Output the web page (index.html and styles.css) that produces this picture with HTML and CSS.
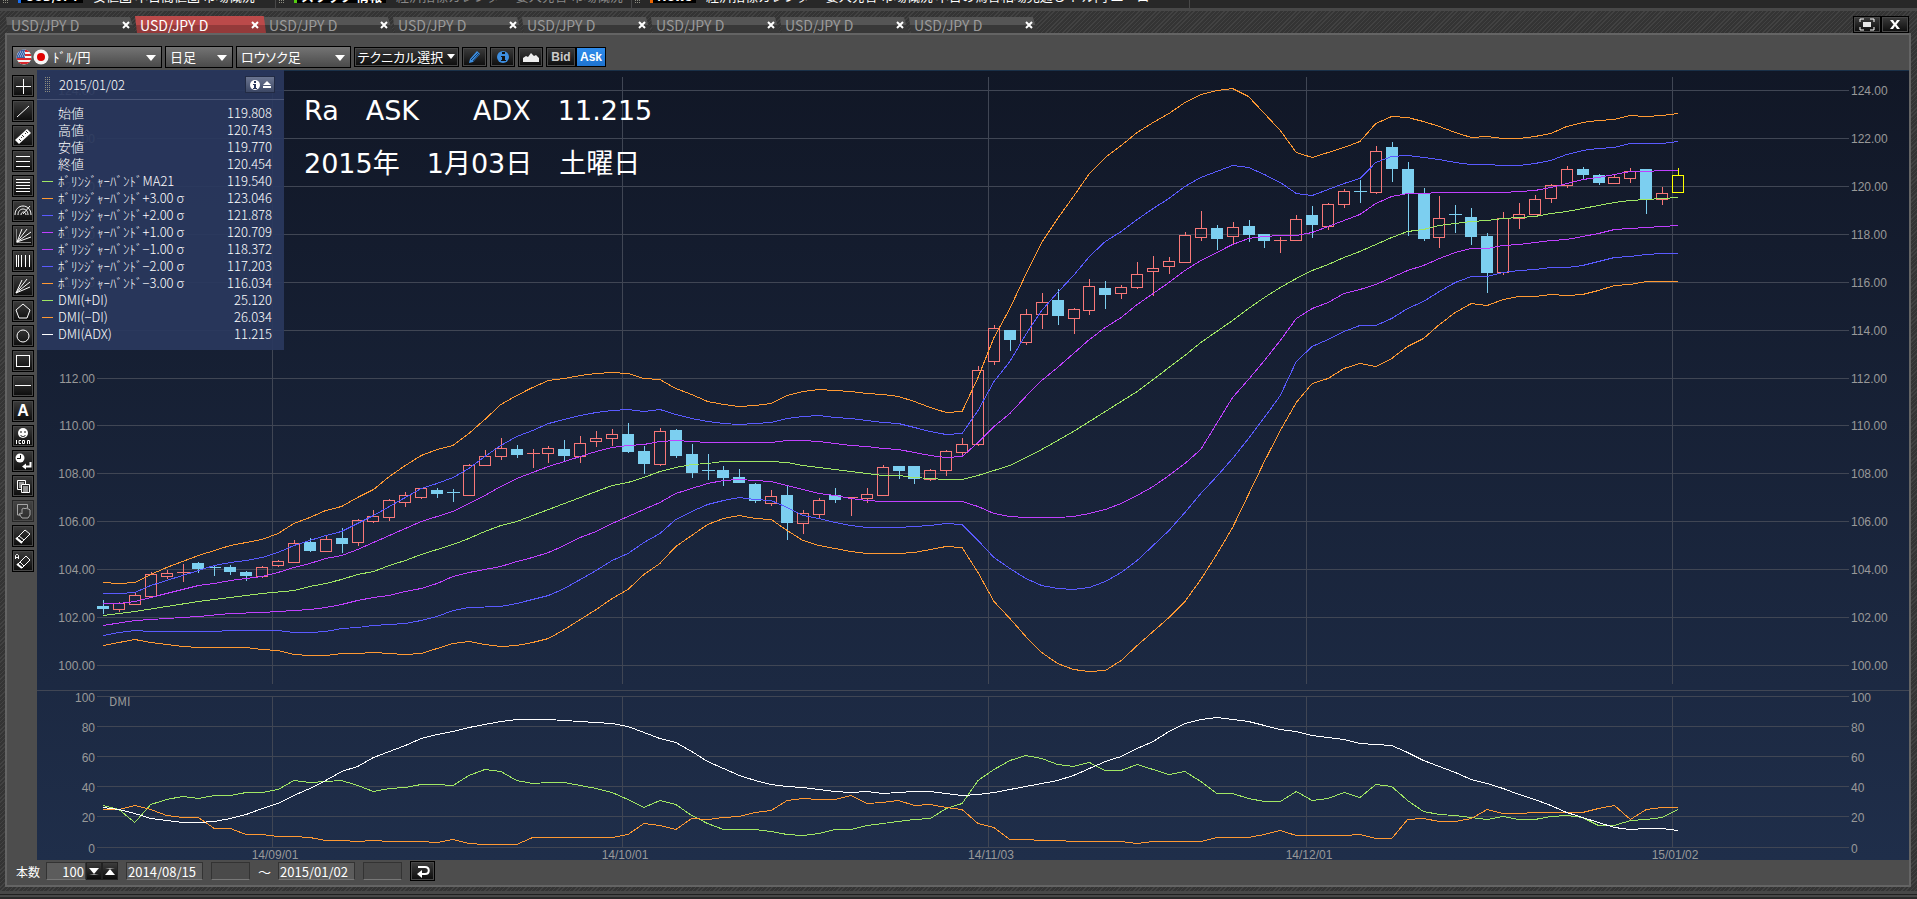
FILE: index.html
```html
<!DOCTYPE html>
<html lang="ja">
<head>
  <meta charset="UTF-8">
  <meta name="viewport" content="width=device-width, initial-scale=1.0">
  <title>USD/JPY D</title>
  <link rel="stylesheet" href="styles.css">
</head>
<body>
  <div class="ticker">
    <div class="ticker-group group-a">
      <span class="grip"></span><b class="pair blue">USD/JPY</b><span class="news">安値圏 本日高値圏 市場概況</span>
    </div>
    <div class="ticker-group group-b">
      <span class="grip"></span><b class="pair green">スワップ 情報</b><span class="news dim">経済指標カレンダー 要人発言 市場概況</span>
    </div>
    <div class="ticker-group group-c">
      <span class="grip"></span><b class="pair orange">News</b><span class="news">経済指標カレンダー 要人発言 市場概況 本日の為替相場見通し ドル円 ユーロ</span>
    </div>
  </div>

  <div class="tab-bar">
    <div class="tabs" id="tabs"></div>
    <div class="window-buttons">
      <button aria-label="最大化"><svg width="16" height="13" viewBox="0 0 16 13"><path d="M1 4V1h4M11 1h4v3M15 9v3h-4M5 12H1V9" fill="none" stroke="#fff"/><rect x="4" y="4" width="8" height="5" fill="#e8e8e8"/></svg></button>
      <button aria-label="閉じる"><svg width="12" height="11" viewBox="0 0 12 11"><path d="M1 1h3l2 3 2-3h3L7.5 5.500 11 10H8L6 7l-2 3H1l3.500-4.500z" fill="#fff"/></svg></button>
    </div>
  </div>

  <div class="window">
    <div class="toolbar">
      <div class="select-box pair-select">
        <svg class="flags" width="34" height="16" viewBox="0 0 34 16">
          <clipPath id="us"><circle cx="8" cy="8" r="7.500"/></clipPath>
          <g clip-path="url(#us)">
            <rect width="16" height="16" fill="#f4f4f4"/>
            <path d="M0 2h16M0 6h16M0 10h16M0 14h16" stroke="#d8262c" stroke-width="2"/>
            <rect width="9" height="9" fill="#3a62a8"/>
            <path d="M2 3h7M1 5h7M2 7h7" stroke="#cfdcf2" stroke-dasharray="1 1"/>
          </g>
          <circle cx="25" cy="8" r="7.500" fill="#f6f6f6"/>
          <circle cx="25" cy="8" r="4" fill="#e00000"/>
        </svg>
        <select aria-label="通貨ペア"><option>ﾄﾞﾙ/円</option></select>
      </div>
      <div class="select-box span-select"><select aria-label="足種"><option>日足</option></select></div>
      <div class="select-box type-select"><select aria-label="チャート種類"><option>ロウソク足</option></select></div>
      <button class="technical">テクニカル選択<i class="caret"></i></button>
      <button class="tool" aria-label="描画"><svg width="16" height="16" viewBox="0 0 16 16"><path d="M2 14l1-4 7-8 3 3-7 8z" fill="#3d8ee0"/><path d="M4 11l7-7M6 12l6-7" stroke="#123a66"/></svg></button>
      <button class="tool" aria-label="情報"><svg width="14" height="14" viewBox="0 0 14 14"><circle cx="7" cy="7" r="6" fill="#3d8ee0"/><path d="M6 2h3v2H6zM5 6h4v4h1v1H5v-1h1V7H5z" fill="#111"/></svg></button>
      <button class="tool" aria-label="エリア"><svg width="18" height="12" viewBox="0 0 18 12"><path d="M1 11V7l3-2 2 1 3-4 3 3 2-1 3 3v4z" fill="#eee"/></svg></button>
      <div class="rate-switch"><button>Bid</button><button class="on">Ask</button></div>
    </div>

    <div class="workspace">
      <div class="draw-tools">
        <button aria-label="十字線"><svg viewBox="0 0 20 20"><path d="M10.500 3v15M3 10.500h15"/></svg></button>
        <button aria-label="直線"><svg viewBox="0 0 20 20"><path d="M4 16L16 5"/></svg></button>
        <button aria-label="チャネル"><svg viewBox="0 0 20 20"><path d="M2 14L14 3l4 4L6 18z" fill="#fff" stroke="none"/><path d="M6 13l2 2M8 11l1 1M9 9l2 2M12 7l1 1M13 5l2 2" stroke="#333"/></svg></button>
        <button aria-label="三本線"><svg viewBox="0 0 20 20"><path d="M3 5.500h14M3 10.500h14M3 15.500h14"/></svg></button>
        <button aria-label="五本線"><svg viewBox="0 0 20 20"><path d="M3 3.500h14M3 6.500h14M3 9.500h14M3 12.500h14M3 15.500h14"/></svg></button>
        <button aria-label="アーク"><svg viewBox="0 0 20 20"><path d="M2 14c0-12 16-12 16 0M5 14c0-8 10-8 10 0M8 14c0-4 5-4 5 0M10 13l7-8"/></svg></button>
        <button aria-label="ファン"><svg viewBox="0 0 20 20"><path d="M3.500 3v13.500H18" stroke="#888"/><path d="M4 16L9 3M4 16L14 3M4 16L18 6M4 16l14-5"/></svg></button>
        <button aria-label="タイムゾーン"><svg viewBox="0 0 20 20"><path d="M3.500 4v12M5.500 4v12M8.500 4v12M12.500 4v12M16.500 4v12"/></svg></button>
        <button aria-label="角度線"><svg viewBox="0 0 20 20"><path d="M3 17L9 4M3 17L14 3M3 17L17 6M3 17l14-6"/></svg></button>
        <button aria-label="五角形"><svg viewBox="0 0 20 20"><path d="M10 3l7 6-3 8H6L3 9z"/></svg></button>
        <button aria-label="円"><svg viewBox="0 0 20 20"><circle cx="10" cy="10" r="6"/></svg></button>
        <button aria-label="四角"><svg viewBox="0 0 20 20"><rect x="3.500" y="4.500" width="13" height="11"/></svg></button>
        <button aria-label="水平線"><svg viewBox="0 0 20 20"><path d="M2 9.500h16"/></svg></button>
        <button class="letter">A</button>
        <button aria-label="アイコン"><svg viewBox="0 0 20 20"><circle cx="10" cy="7" r="5" fill="#fff" stroke="none"/><path d="M8 5v2M12 5v2M7.500 9c1 2 4 2 5 0" stroke="#111"/><path d="M3.500 14v4M8 14.500H6v3h2M9.500 14.500h2v3h-2zM14.500 18v-3.500h2V18"/></svg></button>
        <button aria-label="履歴"><svg viewBox="0 0 20 20"><circle cx="7" cy="7" r="4.500" fill="#fff" stroke="none"/><path d="M7.500 4v3.500H4" stroke="#111"/><path d="M17.500 11v4.500H12" stroke-width="2"/><path d="M9 15.500l4-3v6z" fill="#fff" stroke="none"/></svg></button>
        <button aria-label="コピー"><svg viewBox="0 0 20 20"><path d="M4.500 4.500h8v9h-8z"/><path d="M8.500 8.500h8v8h-8z" fill="#222"/><path d="M6 7h5M6 9h2M6 11h2M10 11h5M10 13h5M10 15h5"/></svg></button>
        <button class="off" aria-label="移動"><svg viewBox="0 0 20 20"><path d="M8 14H4.500V3.500h10V7"/><path d="M9 17l-3-4 2-1 1 1V8l2-1 1 1 1-1 2 1 1 0 1 1v5l-2 3z"/></svg></button>
        <button aria-label="消去"><svg viewBox="0 0 20 20"><path d="M4 12l8-8 5 4-8 8zM6 10l5 4"/><path d="M3 12l6 5" stroke-width="2"/></svg></button>
        <button aria-label="全消去"><svg viewBox="0 0 20 20"><path d="M5 13l8-8 4 4-8 8zM7 11l4 4"/><path d="M4 13l5 4" stroke-width="2"/><path d="M2.500 8V4.500l1-1h1l1 1V8M3 6.500h2"/></svg></button>
      </div>

      <div class="chart-area">
        <svg class="chart" id="chart" viewBox="37 70 1872 790" role="img" aria-label="USD/JPY 日足チャート">
          <defs>
            <linearGradient id="night" x1="0" y1="0" x2="0" y2="1">
              <stop offset="0" stop-color="#111726"/>
              <stop offset="1" stop-color="#1f2e4a"/>
            </linearGradient>
          </defs>
          <rect x="37" y="70" width="1872" height="790" fill="url(#night)"/>
          <path d="M37 70.500h1872" stroke="#1a3048"/>
        </svg>
        <section class="info-panel">
          <header>
            <span class="grip"></span>
            <time>2015/01/02</time>
            <button aria-label="たたむ"><svg width="22" height="12" viewBox="0 0 22 12"><circle cx="6" cy="6" r="5" fill="#fff"/><path d="M5 2h2v2H5zM4 5h3v4h1v1H4V9h1V6H4z" fill="#29375c"/><path d="M14 6l4-4 4 4zM14 7h8v2h-8z" fill="#fff"/></svg></button>
          </header>
          <table>
            <tbody id="infoRows"></tbody>
          </table>
        </section>
      </div>
    </div>

    <form class="period-bar">
      <label for="bars">本数</label>
      <div class="spinner">
        <input type="text" id="bars" value="100">
        <button type="button" class="down" aria-label="減らす"></button>
        <button type="button" class="up" aria-label="増やす"></button>
      </div>
      <input type="text" class="date" aria-label="開始日" value="2014/08/15">
      <input type="text" class="time" aria-label="開始時刻" disabled>
      <span class="tilde">～</span>
      <input type="text" class="date" aria-label="終了日" value="2015/01/02">
      <input type="text" class="time" aria-label="終了時刻" disabled>
      <button type="button" class="apply" aria-label="適用"><svg width="16" height="14" viewBox="0 0 16 14"><path d="M3 3h7c5 0 5 7 0 7H6" fill="none" stroke="#fff" stroke-width="2"/><path d="M2 10l5-4v8z" fill="#fff"/></svg></button>
    </form>
  </div>
  <div class="bottom-edge"></div>
  <script src="script.js"></script>
</body>
</html>
```
FILE: styles.css
```css
* {
  box-sizing: border-box;
}

body {
  margin: 0;
  min-height: 100vh;
  display: flex;
  flex-direction: column;
  color: #fff;
  font-family: "Noto Sans CJK JP", sans-serif;
  font-size: 13px;
  background: repeating-linear-gradient(135deg, #424242 0 1px, #343434 1px 3px);
  overflow-x: hidden;
}

button, input, select {
  font: inherit;
  color: inherit;
  margin: 0;
  padding: 0;
  border: 0;
  border-radius: 0;
}

/* 上部のニュース帯 */
.ticker {
  display: flex;
  height: 11px;
  overflow: hidden;
  background: #282828;
  border-bottom: 3px solid #484848;
  flex: none;
}

.ticker-group {
  display: flex;
  gap: 10px;
  height: 8px;
  overflow: hidden;
  white-space: nowrap;
  padding-left: 2px;
  border-right: 1px solid #484848;
}

.group-a {
  width: 276px;
}

.group-b {
  width: 356px;
}

.group-c {
  width: 558px;
}

.pair {
  padding: 0 4px;
  background: #000;
  border-left: 3px solid #1a6ff0;
}

.pair.green {
  border-color: #5c1;
}

.pair.orange {
  border-color: #e60;
}

.pair, .news {
  display: flex;
  align-items: flex-end;
  overflow: hidden;
  height: 3px;
  line-height: 14px;
}

.news.dim {
  color: #888;
}

.grip {
  width: 6px;
  height: 16px;
  background: conic-gradient(#8c8c80 25%, transparent 0) 0 0 / 2px 2px;
}

.ticker .grip {
  height: 4px;
}

/* タブ */
.tab-bar {
  display: flex;
  justify-content: space-between;
  align-items: flex-end;
  height: 22px;
  padding: 0 8px 0 6px;
  flex: none;
}

.tabs {
  display: flex;
  align-items: flex-end;
}

.tab {
  display: flex;
  align-items: center;
  width: 129px;
  height: 16px;
  padding: 0 2px 0 5px;
  color: #9a9a9a;
  font-size: 14px;
  line-height: 18px;
  background: linear-gradient(#555 0 50%, #383838 50%);
  clip-path: polygon(0 0, 96% 0, 100% 100%, 2px 100%);
}

.tab span {
  flex: 1;
}

.tab button {
  width: 14px;
  height: 14px;
  background: none;
  line-height: 0;
}

.tab.active {
  width: 134px;
  height: 17px;
  margin-right: -5px;
  padding-right: 7px;
  color: #fff;
  background: linear-gradient(#bb4a4a 0 55%, #943a3a 55%);
}

.window-buttons {
  display: flex;
}

.window-buttons button, .technical, .tool, .rate-switch button, .draw-tools button, .apply {
  display: flex;
  align-items: center;
  justify-content: center;
  background: linear-gradient(#3c3c3c, #0c0c0c);
  border: 1px solid #000;
  box-shadow: inset 0 0 0 1px #484848;
}

.window-buttons button {
  width: 28px;
  height: 17px;
}

/* チャート画面 */
.window {
  margin: 0 6px 0 5px;
  background: #4d4d4d;
  border: 2px solid #646464;
  flex: none;
}

.toolbar {
  display: flex;
  align-items: center;
  gap: 3px;
  height: 35px;
  padding: 8px 0 0 5px;
}

.select-box {
  position: relative;
  height: 22px;
  border: 1px solid #000;
  background: linear-gradient(#747474, #4a4a4a);
}

.select-box::after {
  content: "";
  position: absolute;
  right: 5px;
  top: 8px;
  border: 5px solid transparent;
  border-top: 6px solid #fff;
  border-bottom: 0;
  pointer-events: none;
}

.select-box select {
  width: 100%;
  height: 20px;
  padding-left: 4px;
  appearance: none;
  background: none;
  font-feature-settings: "palt";
}

.pair-select {
  width: 150px;
}

.pair-select select {
  padding-left: 40px;
}

.flags {
  position: absolute;
  left: 3px;
  top: 2px;
}

.span-select {
  width: 68px;
}

.type-select {
  width: 115px;
}

.technical {
  width: 105px;
  height: 20px;
  gap: 4px;
  font-feature-settings: "palt";
}

.caret {
  border: 4px solid transparent;
  border-top: 5px solid #fff;
  border-bottom: 0;
}

.tool {
  width: 25px;
  height: 20px;
}

.rate-switch {
  display: flex;
}

.rate-switch button {
  width: 30px;
  height: 20px;
  color: #ccc;
  font: bold 12px "Liberation Sans", sans-serif;
}

.rate-switch .on {
  color: #fff;
  background: linear-gradient(#2e8cec, #1f74d0);
  box-shadow: none;
}

.workspace {
  display: flex;
}

.draw-tools {
  width: 30px;
  padding: 5px 0 0 5px;
  display: flex;
  flex-direction: column;
  gap: 3px;
  flex: none;
}

.draw-tools button {
  width: 22px;
  height: 22px;
}

.draw-tools svg {
  width: 20px;
  height: 20px;
  fill: none;
  stroke: #fff;
}

.draw-tools .letter {
  font: bold 16px "Liberation Sans", sans-serif;
}

.draw-tools .off {
  opacity: 0.5;
}

.chart-area {
  position: relative;
  flex: 1;
  min-width: 0;
}

.chart {
  display: block;
  width: 100%;
}

.chart .grid {
  stroke: #404654;
}

.chart .line {
  fill: none;
  shape-rendering: crispEdges;
}

.chart .candle {
  shape-rendering: crispEdges;
}

.chart .axis {
  fill: #999;
  font: 12px "Liberation Sans", sans-serif;
}

.chart .pane-name {
  fill: #999;
  font-size: 12px;
}

.chart .memo {
  fill: #fff;
  font: 27px "DejaVu Sans", "Noto Sans CJK JP", sans-serif;
}

/* 四本値パネル */
.info-panel {
  position: absolute;
  left: 0;
  top: 0;
  width: 247px;
  height: 280px;
  font-weight: 300;
  background: rgba(42, 56, 94, 0.93);
}

.info-panel header {
  display: flex;
  align-items: center;
  height: 30px;
  padding: 0 9px 0 7px;
  border-bottom: 1px solid #4a5576;
}

.info-panel time {
  flex: 1;
  padding-left: 9px;
}

.info-panel header button {
  display: flex;
  align-items: center;
  justify-content: center;
  width: 30px;
  height: 17px;
  border: 1px solid #222b44;
  background: linear-gradient(#6b7590, #3d4865);
}

.info-panel table {
  width: 100%;
  margin-top: 4px;
  border-collapse: collapse;
}

.info-panel td, .info-panel th {
  height: 17px;
  padding: 0;
  line-height: 17px;
  font-weight: 300;
  text-align: left;
  white-space: nowrap;
}

.info-panel .key {
  width: 21px;
  padding: 2px 0 0 5px;
}

.key i {
  display: block;
  width: 11px;
  height: 1px;
  background: currentColor;
}

.info-panel .value {
  padding-right: 12px;
  text-align: right;
}

/* 期間指定 */
.period-bar {
  display: flex;
  align-items: center;
  gap: 8px;
  height: 25px;
  padding: 0 0 3px 9px;
}

.period-bar label {
  font-size: 12px;
  margin-right: -2px;
}

.period-bar input {
  height: 18px;
  padding: 0 1px;
  background: #5c5c5c;
  border: 1px solid #333;
  border-bottom-color: #777;
}

.spinner {
  display: flex;
  width: 72px;
}

.spinner input {
  width: 40px;
  text-align: right;
}

.spinner button {
  width: 16px;
  height: 18px;
  display: flex;
  align-items: center;
  justify-content: center;
  background: linear-gradient(#3c3c3c, #0c0c0c);
  border: 1px solid #222;
}

.spinner button::after {
  content: "";
  border: 5px solid transparent;
}

.spinner .down::after {
  border-top: 6px solid #fff;
  border-bottom: 1px solid #aaa;
}

.spinner .up::after {
  border-bottom: 6px solid #fff;
  border-top: 1px solid #aaa;
}

.period-bar .date {
  width: 77px;
}

.period-bar .time {
  width: 39px;
  background: #4a4a4a;
}

.tilde {
  width: 12px;
  text-align: center;
}

.apply {
  width: 25px;
  height: 20px;
}

.bottom-edge {
  margin-top: 4px;
  height: 8px;
  background: linear-gradient(#484848 0 3px, #202020 3px 4px, #484848 4px 6px, #2a2a2a 6px);
  flex: none;
}
```
FILE: script.js
```js
const SVG_NS = "http://www.w3.org/2000/svg";
const chart = document.getElementById("chart");

const COLORS = {
  green: "#a0e664",
  orange: "#ff9933",
  blue: "#5a5aff",
  purple: "#c040ff",
  white: "#ffffff",
  up: "#f87878",
  down: "#7ccff0",
  last: "#ffff00"
};

const X0 = 103;
const STEP = 15.91;

// [u/d, high, body top, body bottom, low]
const candles = `
d600,606,609,614 u602,603,609,612 u593,595,604,605 u572,574,596,596 u570,573,576,579
u564,572,572,582 d562,563,569,573 d565,567,567,576 d565,567,572,575 d571,572,576,581
u566,567,576,578 u560,561,565,567 u540,543,562,563 d538,542,551,552 u536,539,551,552
d528,538,544,553 u519,520,542,546 u510,516,521,523 u499,500,517,521 u492,495,502,507
u488,488,497,499 d488,490,494,498 d489,492,492,502 u464,465,495,496 u450,456,465,466
u438,448,456,460 d445,449,455,458 u449,453,453,468 u446,448,453,463 d440,449,456,461
u436,443,456,463 u431,438,441,447 u429,434,438,446 d423,434,452,453 d446,451,464,474
u428,431,464,466 d429,430,456,458 d444,454,473,478 d454,470,470,480 d466,470,478,486
d469,477,483,483 d483,484,501,503 u490,496,503,506 d486,495,523,540 u510,513,523,534
u498,500,514,518 d488,495,500,503 u497,497,497,516 u488,494,498,503 u465,467,495,496
d466,466,471,479 d466,466,479,484 u469,470,479,481 u450,451,470,476 u438,444,452,456
u366,370,444,446 u325,328,361,365 d330,330,340,351 u309,314,342,345 u293,302,314,329
d289,300,316,325 u308,309,318,334 u279,286,310,315 d281,288,295,309 u285,287,293,299
u262,274,287,289 u256,268,271,296 u257,261,266,274 u232,235,262,263 u211,228,237,241
d225,228,239,250 u222,227,236,245 d220,226,235,242 d234,234,241,248 u237,240,240,253
u215,219,240,240 d206,215,225,238 u203,204,226,230 u189,191,204,208 d180,191,191,203
u146,151,192,194 d142,147,169,182 d162,169,194,236 d188,193,239,241 u196,218,237,248
d205,214,214,233 d208,217,237,245 d233,236,273,293 u212,218,272,275 u203,214,218,229
u195,199,214,215 u184,185,198,203 u166,169,185,188 d167,169,175,179 d174,175,183,185
u174,177,183,183 u168,171,178,183 d169,169,199,214 u187,193,199,205 y168,175,192,193
`.trim().split(/\s+/);

// index,y pairs
const lines = [
  { color: "orange", points: "0,582 1,583 2,582 3,574 4,567 5,561 6,555 7,550 8,545 9,542 10,539 11,533 12,523 13,517 14,510 15,506 16,497 17,489 18,476 19,465 20,455 21,449 22,445 23,433 24,419 25,404 26,395 27,387 28,380 29,378 30,375 31,373 32,372 33,373 34,378 35,379 36,388 37,394 38,401 39,404 40,406 41,405 42,403 43,395 44,391 45,389 46,390 47,391 48,393 49,394 50,396 51,401 52,407 53,412 54,411 55,377 56,337 57,308 58,274 59,242 60,218 61,196 62,173 63,157 64,145 65,132 66,122 67,113 68,102 69,94 70,90 71,88 72,96 73,113 74,130 75,152 76,157 77,152 78,147 79,141 80,123 81,116 82,117 83,121 84,126 85,132 86,137 87,136 88,138 89,138 90,136 91,133 92,126 93,122 94,120 95,119 96,115 97,116 98,115 99,113" },
  { color: "blue", points: "0,593 1,593 2,592 3,585 4,580 5,575 6,570 7,565 8,562 9,560 10,557 11,552 12,545 13,540 14,535 15,531 16,523 17,515 18,506 19,497 20,488 21,483 22,477 23,468 24,456 25,445 26,436 27,430 28,423 29,419 30,415 31,412 32,410 33,409 34,411 35,409 36,414 37,418 38,421 39,423 40,424 41,423 42,422 43,418 44,416 45,415 46,417 47,418 48,420 49,422 50,423 51,427 52,431 53,434 54,433 55,410 56,381 57,361 58,334 59,310 60,292 61,275 62,256 63,241 64,231 65,219 66,208 67,198 68,186 69,177 70,171 71,165 72,167 73,174 74,182 75,193 76,195 77,189 78,183 79,178 80,162 81,156 82,155 83,157 84,159 85,162 86,164 87,164 88,165 89,165 90,163 91,160 92,154 93,150 94,148 95,147 96,143 97,143 98,143 99,141" },
  { color: "purple", points: "0,603 1,603 2,601 3,597 4,593 5,589 6,585 7,583 8,580 9,578 10,576 11,572 12,567 13,563 14,558 15,555 16,549 17,542 18,535 19,528 20,521 21,516 22,511 23,503 24,495 25,486 26,478 27,472 28,466 29,461 30,456 31,451 32,447 33,445 34,444 35,441 36,440 37,441 38,442 42,442 43,440 44,440 45,441 46,443 47,445 48,446 49,448 50,449 51,452 52,455 53,457 54,456 55,442 56,426 57,413 58,396 59,380 60,367 61,353 62,339 63,327 64,317 65,304 66,293 67,282 68,270 69,260 70,252 71,244 72,238 73,236 74,235 75,235 76,232 77,226 78,220 79,214 80,203 81,196 82,193 83,193 84,192 88,192 89,191 90,190 91,187 92,183 93,179 94,177 95,174 96,171 97,171 98,170 99,170" },
  { color: "green", points: "0,615 2,611 4,606 6,601 8,597 10,593 12,590 13,586 14,583 15,579 16,574 17,571 18,565 19,560 20,554 21,549 22,544 23,538 24,531 25,525 26,521 27,515 28,509 29,503 30,497 31,491 32,485 33,482 34,477 35,471 36,467 37,464 38,463 39,461 42,461 43,462 44,465 45,467 46,469 47,471 48,473 49,475 50,475 51,477 52,478 53,479 54,479 55,475 56,470 57,465 58,457 59,449 60,440 61,431 62,421 63,411 64,401 65,391 66,379 67,367 68,355 69,342 70,331 71,320 72,308 73,297 74,287 75,278 76,270 77,264 78,257 79,251 80,244 81,237 82,231 83,229 84,225 85,223 86,221 87,220 88,218 89,217 90,216 91,213 92,211 93,208 94,205 95,202 96,200 97,199 98,198 99,197" },
  { color: "purple", points: "0,625 2,620 4,618 6,616 8,613 10,612 12,610 13,609 14,607 15,604 16,600 17,597 18,595 19,591 20,588 21,583 22,576 23,572 24,569 25,566 26,561 27,557 28,552 29,545 30,537 31,531 32,523 33,516 34,509 35,502 36,493 37,488 38,483 39,480 40,479 41,480 42,481 43,485 44,489 45,493 46,495 47,498 48,500 49,501 54,501 55,506 56,513 57,516 58,517 60,517 61,516 62,513 63,509 64,503 65,495 66,486 67,475 68,463 69,449 70,423 71,397 72,379 73,360 74,340 75,318 76,308 77,302 78,293 79,289 80,284 81,277 82,270 83,265 84,258 85,252 86,248 87,248 88,245 89,244 90,242 91,240 92,239 93,236 94,233 95,229 96,228 97,227 98,226 99,225" },
  { color: "blue", points: "0,635 1,632 2,630 3,631 7,631 8,630 11,630 12,632 13,632 14,631 15,628 16,627 17,625 18,624 19,623 20,620 21,616 22,610 23,607 25,606 26,603 27,599 28,595 29,588 30,579 31,570 32,560 33,553 34,542 35,533 36,519 37,511 38,504 39,500 40,497 41,499 42,500 43,507 44,515 45,518 46,522 47,525 48,527 50,527 51,526 52,525 53,523 54,524 55,540 56,557 57,568 58,578 59,585 60,588 61,589 62,587 63,581 64,572 65,560 66,545 67,530 68,512 69,493 70,476 71,458 72,438 73,417 74,395 75,361 76,346 77,339 78,331 79,325 80,325 81,318 82,308 83,301 84,291 85,282 86,276 87,276 88,272 89,270 90,269 91,267 92,267 93,265 94,261 95,257 96,256 97,254 98,253 99,253" },
  { color: "orange", points: "0,645 1,642 2,639 3,642 4,644 5,646 6,647 9,647 10,649 11,650 12,654 13,655 14,655 15,653 16,653 17,652 18,653 19,654 20,653 21,648 22,643 23,641 24,644 25,646 26,645 27,642 28,638 29,629 30,619 31,609 32,598 33,589 34,574 35,563 36,546 37,535 38,524 39,518 40,515 41,518 42,519 43,530 44,540 45,545 46,548 47,551 48,553 50,553 51,552 52,549 53,546 54,547 55,572 56,601 57,618 58,636 59,652 60,663 61,669 62,671 63,670 64,660 65,645 66,631 67,617 68,601 69,579 70,554 71,527 72,494 73,461 74,430 75,402 76,383 77,378 78,368 79,363 80,366 81,358 82,346 83,338 84,324 85,312 86,303 87,305 88,299 89,296 90,296 91,294 92,295 93,294 94,290 95,285 96,284 97,281 99,281" },
  // DMI
  { color: "green", points: "0,805 1,809 2,822 3,804 4,799 5,796 6,798 7,795 8,795 9,792 10,792 11,789 12,780 13,782 14,781 15,780 16,785 17,791 18,788 19,787 20,784 21,784 22,785 23,775 24,769 25,771 26,780 27,783 28,782 29,782 30,785 31,788 32,792 33,799 34,807 35,800 36,804 37,815 38,823 39,829 41,829 42,831 43,834 44,835 45,833 46,829 47,829 48,825 49,823 50,821 51,819 52,818 53,808 54,803 55,780 56,769 57,760 58,755 59,758 60,764 61,766 62,762 63,770 64,770 65,764 66,769 67,774 68,771 69,781 70,793 71,793 72,798 73,801 74,801 75,791 76,800 77,798 78,792 79,797 80,784 81,786 82,800 83,811 84,814 85,815 86,817 87,819 88,816 89,819 90,819 91,816 92,815 93,817 94,825 95,825 96,820 97,819 98,817 99,809" },
  { color: "orange", points: "0,809 1,809 2,805 3,809 4,815 5,817 6,817 7,828 8,828 9,834 10,834 11,836 12,836 13,837 14,840 15,840 16,841 17,840 18,841 20,841 21,842 22,839 23,843 24,844 26,844 27,837 32,837 33,834 34,823 35,825 36,829 37,818 38,819 39,817 40,816 41,812 42,810 43,800 44,798 45,799 46,799 47,795 48,803 49,802 50,800 51,805 52,804 53,807 54,809 55,823 56,827 57,839 58,839 59,840 60,840 61,841 64,841 65,843 66,841 69,841 70,837 72,837 73,834 74,830 75,835 78,835 79,834 80,838 81,838 82,819 83,818 84,821 85,821 86,818 87,809 88,813 89,813 90,812 93,812 94,808 95,805 96,819 97,809 98,807 99,807" },
  { color: "white", points: "0,807 1,809 2,813 3,818 4,820 5,822 6,822 7,821 8,818 9,814 10,808 11,803 12,795 13,788 14,780 15,771 16,766 17,757 18,751 19,745 20,738 21,734 22,731 23,727 24,724 25,721 26,719 28,719 29,720 30,721 31,722 32,723 33,726 34,732 35,738 36,742 37,751 38,761 39,768 40,775 41,780 42,784 43,786 44,787 45,789 46,791 47,792 48,791 49,793 50,792 51,791 52,791 53,793 54,795 55,794 56,792 57,789 58,786 59,783 60,780 61,775 62,768 63,761 64,756 65,748 66,741 67,731 68,723 69,719 70,717 71,719 72,721 73,725 74,729 75,731 76,735 77,737 78,739 79,743 80,744 81,745 82,752 83,760 84,766 85,772 86,779 87,783 88,788 89,794 90,799 91,805 92,812 93,817 94,822 95,827 96,829 97,828 98,828 99,830" }
];

const infoRows = [
  ["", "始値", "119.808"],
  ["", "高値", "120.743"],
  ["", "安値", "119.770"],
  ["", "終値", "120.454"],
  ["green", "ﾎﾞﾘﾝｼﾞｬｰﾊﾞﾝﾄﾞMA21", "119.540"],
  ["orange", "ﾎﾞﾘﾝｼﾞｬｰﾊﾞﾝﾄﾞ+3.00 σ", "123.046"],
  ["blue", "ﾎﾞﾘﾝｼﾞｬｰﾊﾞﾝﾄﾞ+2.00 σ", "121.878"],
  ["purple", "ﾎﾞﾘﾝｼﾞｬｰﾊﾞﾝﾄﾞ+1.00 σ", "120.709"],
  ["purple", "ﾎﾞﾘﾝｼﾞｬｰﾊﾞﾝﾄﾞ−1.00 σ", "118.372"],
  ["blue", "ﾎﾞﾘﾝｼﾞｬｰﾊﾞﾝﾄﾞ−2.00 σ", "117.203"],
  ["orange", "ﾎﾞﾘﾝｼﾞｬｰﾊﾞﾝﾄﾞ−3.00 σ", "116.034"],
  ["green", "DMI(+DI)", "25.120"],
  ["orange", "DMI(−DI)", "26.034"],
  ["white", "DMI(ADX)", "11.215"]
];

function add(name, attrs, text) {
  const el = document.createElementNS(SVG_NS, name);
  for (const key in attrs) el.setAttribute(key, attrs[key]);
  if (text) el.textContent = text;
  chart.appendChild(el);
}

function grid(d) {
  add("path", { d: d, class: "grid" });
}

function axisLabel(x, y, text, anchor) {
  add("text", { x: x, y: y, class: "axis", "text-anchor": anchor }, text);
}

function drawGrid() {
  for (let price = 124; price >= 100; price -= 2) {
    const y = Math.floor(90.52 + (124 - price) * 23.958) + 0.5;
    grid(`M97 ${y}H1849`);
    axisLabel(95, y + 4.5, price.toFixed(2), "end");
    axisLabel(1851, y + 4.5, price.toFixed(2), "start");
  }
  [696, 726, 756, 786, 816, 847].forEach((y, i) => {
    grid(`M97 ${y + 0.5}H1849`);
    axisLabel(95, y + 6, String(100 - i * 20), "end");
    axisLabel(1851, y + 6, String(100 - i * 20), "start");
  });
  grid("M37 690.5H1909");
  [[272, "14/09/01"], [622, "14/10/01"], [988, "14/11/03"], [1306, "14/12/01"], [1672, "15/01/02"]].forEach(([x, label]) => {
    grid(`M${x + 0.5} 77V684M${x + 0.5} 697V847`);
    axisLabel(x + 3, 859, label, "middle");
  });
}

function drawCandles() {
  candles.forEach((item, i) => {
    const x = Math.round(X0 + i * STEP);
    const [high, top, bottom, low] = item.slice(1).split(",").map(Number);
    const down = item[0] === "d";
    const color = down ? COLORS.down : item[0] === "y" ? COLORS.last : COLORS.up;
    if (top === bottom) {
      add("path", { d: `M${x + 0.5} ${high}V${low}M${x - 6} ${top + 0.5}H${x + 7}`, stroke: color, class: "candle" });
      return;
    }
    add("path", { d: `M${x + 0.5} ${high}V${top}M${x + 0.5} ${bottom}V${low}`, stroke: color, class: "candle" });
    if (down) {
      add("rect", { x: x - 6, y: top, width: 12, height: bottom - top, fill: color, class: "candle" });
    } else {
      add("rect", { x: x - 5.5, y: top + 0.5, width: 11, height: bottom - top, fill: "none", stroke: color, class: "candle" });
    }
  });
}

function drawLines() {
  lines.forEach((line) => {
    const points = line.points.split(" ").map((pair) => {
      const [i, y] = pair.split(",").map(Number);
      return `${(X0 + i * STEP).toFixed(1)},${y + 0.5}`;
    });
    add("polyline", { points: points.join(" "), stroke: COLORS[line.color], class: "line" });
  });
}

function drawText() {
  add("text", { x: 109, y: 706, class: "pane-name" }, "DMI");
  add("text", { x: 304, y: 120, class: "memo" }, "Ra　ASK　　ADX　11.215");
  add("text", { x: 304, y: 173, class: "memo" }, "2015年　1月03日　土曜日");
}

function fillInfo() {
  const body = document.getElementById("infoRows");
  infoRows.forEach(([color, name, value]) => {
    const key = color ? `<i style="color: ${COLORS[color]}"></i>` : "";
    body.insertAdjacentHTML("beforeend", `<tr><td class="key">${key}</td><th>${name}</th><td class="value">${value}</td></tr>`);
  });
}

function fillTabs() {
  const tabs = document.getElementById("tabs");
  for (let i = 0; i < 8; i++) {
    tabs.insertAdjacentHTML("beforeend", `<div class="tab${i === 1 ? " active" : ""}"><span>USD/JPY D</span><button aria-label="閉じる"><svg width="8" height="8" viewBox="0 0 8 8"><path d="M1 1l6 6M7 1L1 7" stroke="#fff" stroke-width="2"/></svg></button></div>`);
  }
}

drawGrid();
drawCandles();
drawLines();
drawText();
fillInfo();
fillTabs();
```
